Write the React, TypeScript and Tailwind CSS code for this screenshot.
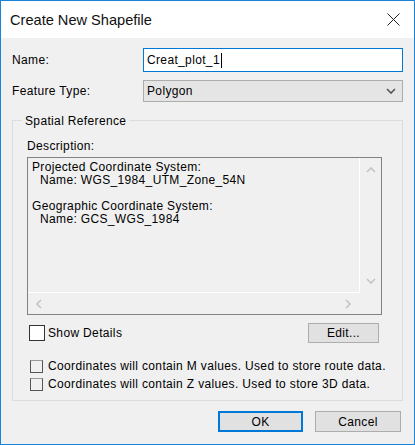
function Chevron({ dir, color, className }: { dir: "up" | "down" | "left" | "right"; color: string; className?: string }) {
  const pts: Record<string, string> = {
    up: "1,5 5,1 9,5",
    down: "1,1 5,5 9,1",
    left: "5,1 1,5 5,9",
    right: "1,1 5,5 1,9",
  };
  const vertical = dir === "up" || dir === "down";
  return (
    <svg width={vertical ? 10 : 6} height={vertical ? 6 : 10} viewBox={vertical ? "0 0 10 6" : "0 0 6 10"} className={className}>
      <polyline points={pts[dir]} fill="none" stroke={color} strokeWidth="1.6" />
    </svg>
  );
}

function OldCheck() {
  return <div className="size-[13px] shrink-0 border border-[#555] border-t-[#9a9a9a] bg-[#f0f0f0]" />;
}

export default function App() {
  return (
    <div className="w-[415px] h-[445px] bg-[#f0f0f0] border border-[#1883d7] flex flex-col text-[12px] leading-[14px] tracking-[0.35px] text-black font-['Liberation_Sans',Arial,sans-serif]">
      {/* title bar */}
      <div className="h-[37px] shrink-0 bg-white flex items-center justify-between pl-[9px] pr-[14px]">
        <span className="text-[14.6px] leading-[18px] tracking-normal text-[#111]">Create New Shapefile</span>
        <svg width="13" height="13" viewBox="0 0 13 13">
          <path d="M0.5 0.5 L12.5 12.5 M12.5 0.5 L0.5 12.5" stroke="#222" strokeWidth="1" fill="none" />
        </svg>
      </div>

      <div className="flex-1 flex flex-col px-[11px]">
        <div className="flex items-center mt-[10px]">
          <span className="w-[131px]">Name:</span>
          <div className="flex-1 h-[24px] border border-[#0078d7] bg-white flex items-center px-[3px]">
            <span>Creat_plot_1</span>
            <span className="w-px h-[15px] bg-black ml-px" />
          </div>
        </div>

        <div className="flex items-center mt-[8px]">
          <span className="w-[131px]">Feature Type:</span>
          <div className="flex-1 h-[22px] border border-[#adadad] bg-[#e5e5e5] flex items-center justify-between pl-[3px] pr-[6px]">
            <span>Polygon</span>
            <Chevron dir="down" color="#555" />
          </div>
        </div>

        <div className="relative mt-[18px] border border-[#dcdcdc] pl-[14px] pr-[20px] pt-[18px] pb-[7px]">
          <span className="absolute left-[9px] top-[-7px] px-[3px] bg-[#f0f0f0]">Spatial Reference</span>
          <div className="mb-[4px]">Description:</div>

          <div className="h-[158px] border border-[#828282] flex flex-col">
            <div className="flex-1 flex">
              <div className="flex-1 border-r border-b border-white pl-[4px] pt-[3px] leading-[13px]">
                <div>Projected Coordinate System:</div>
                <div className="pl-[8px]">Name: WGS_1984_UTM_Zone_54N</div>
                <div className="h-[13px]" />
                <div>Geographic Coordinate System:</div>
                <div className="pl-[8px]">Name: GCS_WGS_1984</div>
              </div>
              <div className="w-[21px] flex flex-col items-center justify-between pt-[9px] pb-[9px]">
                <Chevron dir="up" color="#c4c4c4" />
                <Chevron dir="down" color="#c4c4c4" />
              </div>
            </div>
            <div className="h-[21px] flex items-center">
              <div className="flex-1 flex items-center justify-between pl-[8px] pr-[9px]">
                <Chevron dir="left" color="#c4c4c4" />
                <Chevron dir="right" color="#c4c4c4" />
              </div>
              <div className="w-[21px]" />
            </div>
          </div>

          <div className="flex items-center justify-between mt-[8px] h-[20px] pl-[2px] pr-[3px]">
            <div className="flex items-center">
              <div className="size-[16px] border border-[#333] bg-white" />
              <span className="ml-[3px]">Show Details</span>
            </div>
            <button className="w-[71px] h-[20px] border border-[#adadad] bg-[#e1e1e1] flex items-center justify-center">
              Edit...
            </button>
          </div>

          <div className="flex items-center h-[18px] mt-[14px] pl-[3px] whitespace-nowrap">
            <OldCheck />
            <span className="ml-[5px]">Coordinates will contain M values. Used to store route data.</span>
          </div>
          <div className="flex items-center h-[18px] pl-[3px] whitespace-nowrap">
            <OldCheck />
            <span className="ml-[5px]">Coordinates will contain Z values. Used to store 3D data.</span>
          </div>
        </div>

        <div className="flex justify-end gap-[12px] mt-[10px] pr-[2px]">
          <button className="w-[85px] h-[21px] border-2 border-[#0078d7] bg-[#e1e1e1] flex items-center justify-center">
            OK
          </button>
          <button className="w-[86px] h-[21px] border border-[#adadad] bg-[#e1e1e1] flex items-center justify-center">
            Cancel
          </button>
        </div>
      </div>
    </div>
  );
}
